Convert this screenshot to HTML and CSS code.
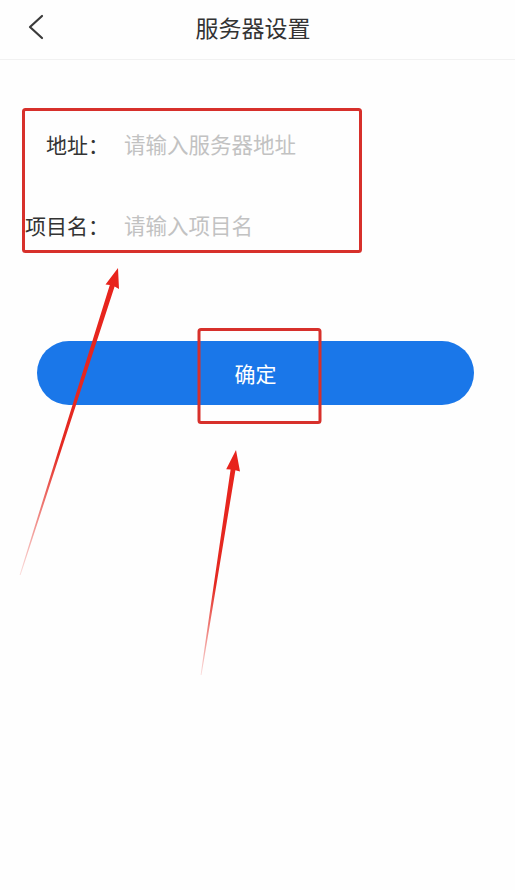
FILE: index.html
```html
<!DOCTYPE html>
<html lang="zh">
<head>
<meta charset="utf-8">
<title>服务器设置</title>
<link rel="stylesheet" href="styles.css">
</head>
<body>
<div class="page">
  <header class="topbar">
    <span class="back">
      <svg width="20" height="28" viewBox="0 0 20 28"><polyline points="14,3 2,14 14,25" fill="none" stroke="#3a3a3a" stroke-width="2.2" stroke-linecap="round" stroke-linejoin="round"/></svg>
    </span>
    <h1 class="title">服务器设置</h1>
  </header>

  <form class="form">
    <div class="row">
      <label class="label">地址：</label>
      <input class="field" type="text" placeholder="请输入服务器地址">
    </div>
    <div class="row">
      <label class="label">项目名：</label>
      <input class="field" type="text" placeholder="请输入项目名">
    </div>
  </form>

  <div class="actions">
    <button class="confirm" type="button">确定</button>
  </div>

  <svg class="annot" width="515" height="890" viewBox="0 0 515 890">
    <defs>
      <linearGradient id="fade1" x1="118" y1="268" x2="20" y2="575" gradientUnits="userSpaceOnUse">
        <stop offset="0" stop-color="#e8231c"/>
        <stop offset="0.6" stop-color="#e42a22"/>
        <stop offset="1" stop-color="#e42a22" stop-opacity="0.15"/>
      </linearGradient>
      <linearGradient id="fade2" x1="236" y1="450" x2="201" y2="675" gradientUnits="userSpaceOnUse">
        <stop offset="0" stop-color="#e8231c"/>
        <stop offset="0.6" stop-color="#e42a22"/>
        <stop offset="1" stop-color="#e42a22" stop-opacity="0.15"/>
      </linearGradient>
    </defs>
    <rect x="23.5" y="109.5" width="337" height="142" rx="2" fill="none" stroke="#d7302b" stroke-width="3"/>
    <rect x="199" y="329.5" width="121" height="93" rx="2" fill="none" stroke="#d7302b" stroke-width="3"/>
    <polygon fill="url(#fade1)" points="118,268 119,289 114.6,286.6 20.6,575 19.6,575 109.8,285 105.5,284.6"/>
    <polygon fill="url(#fade2)" points="236,450 240,471.5 235.4,470.2 201.5,675 200.6,675 230.6,469.4 226.2,469.2"/>
  </svg>
</div>
</body>
</html>
```

FILE: styles.css
```css
* { box-sizing: border-box; }
html, body {
  margin: 0;
  padding: 0;
  background: #ffffff;
}
body {
  font-family: "Noto Sans CJK SC", "Noto Sans", sans-serif;
  color: #333333;
}
.page {
  position: relative;
  width: 515px;
  height: 890px;
  overflow: hidden;
  background: #fefefe;
}
.topbar {
  position: relative;
  height: 60px;
  padding-bottom: 5px;
  padding-right: 9px;
  border-bottom: 1px solid #f1f1f1;
  display: flex;
  align-items: center;
  justify-content: center;
}
.back {
  position: absolute;
  left: 28px;
  top: 13px;
  width: 20px;
  height: 28px;
  display: block;
}
.back svg { display: block; }
.title {
  margin: 0;
  font-size: 23px;
  font-weight: 400;
  color: #333333;
  letter-spacing: 0;
}
.form {
  margin: 43px 0 0 0;
  display: flex;
  flex-direction: column;
}
.row {
  height: 81px;
  display: flex;
  align-items: center;
}
.label {
  width: 109px;
  text-align: right;
  font-size: 21px;
  color: #333333;
  white-space: nowrap;
  flex-shrink: 0;
}
.field {
  margin-left: 15px;
  border: none;
  outline: none;
  background: transparent;
  font-family: "Noto Sans CJK SC", "Noto Sans", sans-serif;
  font-size: 21.5px;
  color: #333333;
  padding: 0;
  width: 300px;
}
.field::placeholder {
  color: #c2c2c2;
}
.actions {
  margin-top: 76px;
  padding-left: 37px;
}
.confirm {
  width: 437px;
  height: 64px;
  border: none;
  border-radius: 32px;
  background: #1a77e9;
  color: #ffffff;
  font-family: "Noto Sans CJK SC", "Noto Sans", sans-serif;
  font-size: 21px;
  padding: 0;
}
.annot {
  position: absolute;
  left: 0;
  top: 0;
  pointer-events: none;
}
```
